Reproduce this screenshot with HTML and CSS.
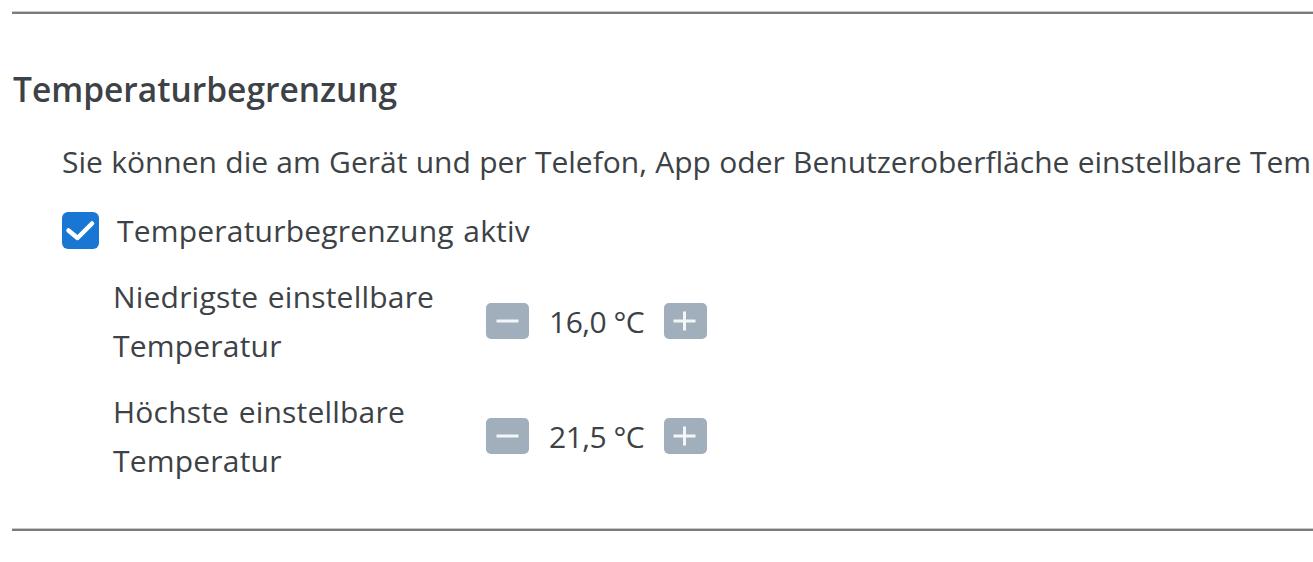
FILE: index.html
```html
<!DOCTYPE html>
<html lang="de">
<head>
<meta charset="utf-8">
<link rel="stylesheet" href="styles.css">
</head>
<body>
<div class="page">
  <div class="rule"></div>
  <section class="block">
    <h2 class="title">Temperaturbegrenzung</h2>
    <div class="content">
      <p class="intro">Sie können die am Gerät und per Telefon, App oder Benutzeroberfläche einstellbare Temperatur begrenzen.</p>
      <label class="check">
        <span class="box">
          <svg viewBox="0 0 37 37" width="37" height="37"><path d="M6.5 18.5 L15.5 26 L30 11.5" fill="none" stroke="#fff" stroke-width="4.5" stroke-linecap="round" stroke-linejoin="round"/></svg>
        </span>
        <span class="check-label">Temperaturbegrenzung aktiv</span>
      </label>
      <div class="rows">
        <div class="row">
          <div class="row-label">Niedrigste einstellbare Temperatur</div>
          <div class="stepper">
            <span class="btn"><svg viewBox="0 0 43 36" width="43" height="36"><rect x="10.5" y="16.5" width="22" height="3" fill="#f3f5f7"/></svg></span>
            <span class="value">16,0 °C</span>
            <span class="btn"><svg viewBox="0 0 43 36" width="43" height="36"><rect x="9.5" y="16.5" width="22" height="3" fill="#f3f5f7"/><rect x="19" y="8.5" width="3" height="19" fill="#f3f5f7"/></svg></span>
          </div>
        </div>
        <div class="row">
          <div class="row-label">Höchste einstellbare Temperatur</div>
          <div class="stepper">
            <span class="btn"><svg viewBox="0 0 43 36" width="43" height="36"><rect x="10.5" y="16.5" width="22" height="3" fill="#f3f5f7"/></svg></span>
            <span class="value">21,5 °C</span>
            <span class="btn"><svg viewBox="0 0 43 36" width="43" height="36"><rect x="9.5" y="16.5" width="22" height="3" fill="#f3f5f7"/><rect x="19" y="8.5" width="3" height="19" fill="#f3f5f7"/></svg></span>
          </div>
        </div>
      </div>
    </div>
  </section>
  <div class="rule"></div>
</div>
</body>
</html>
```

FILE: styles.css
```css
html, body {
  margin: 0;
  padding: 0;
  background: #ffffff;
  overflow: hidden;
}
body {
  font-family: "Open Sans", "Noto Sans", sans-serif;
  color: #3c4246;
  font-size: 30px;
  letter-spacing: 0.2px;
  word-spacing: 1.5px;
  line-height: 49px;
}
.page {
  width: 1700px;
  padding: 11px 0 0 12px;
}
.rule {
  height: 2px;
  border-top: 1px solid #c9c9c9;
  background: #7b7b7b;
}
.block {
  padding: 50px 0 0 0;
  height: 514px;
  box-sizing: border-box;
}
.title {
  margin: 0;
  font-size: 33.5px;
  font-weight: 600;
  letter-spacing: 0;
  word-spacing: 0;
  line-height: 50px;
  padding-left: 1px;
}
.content {
  padding-left: 50px;
  margin-top: 23px;
}
.intro {
  margin: 0;
  white-space: nowrap;
  letter-spacing: 0;
  word-spacing: 0.5px;
}
.check {
  display: flex;
  align-items: center;
  gap: 18px;
  margin-top: 20px;
}
.box {
  width: 37px;
  height: 37px;
  border-radius: 6px;
  background: #1976d2;
  display: block;
  flex: none;
}
.box svg {
  display: block;
}
.rows {
  margin-top: 17px;
  padding-left: 51px;
  display: flex;
  flex-direction: column;
  gap: 17px;
}
.row {
  display: grid;
  grid-template-columns: 373px auto;
  align-items: center;
}
.row-label {
  width: 350px;
}
.stepper {
  display: flex;
  align-items: center;
  gap: 20px;
}
.btn {
  width: 43px;
  height: 36px;
  border-radius: 5px;
  background: #a1afbc;
  display: block;
}
.btn svg {
  display: block;
}
.value {
  white-space: nowrap;
  letter-spacing: -0.5px;
  word-spacing: 0;
}
```
